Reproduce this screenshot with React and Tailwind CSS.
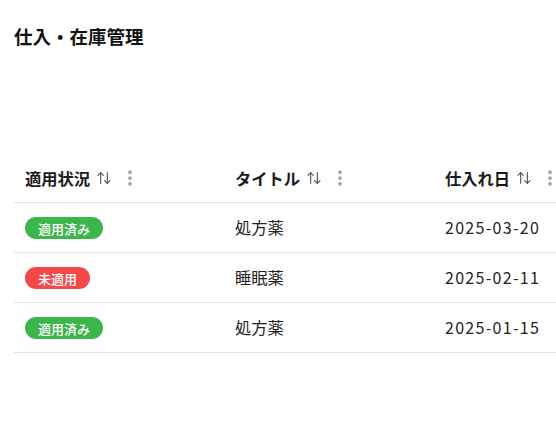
import React from "react";
import { ArrowUpDown, EllipsisVertical } from "lucide-react";

const rows = [
  { status: "適用済み", ok: true, title: "処方薬", date: "2025-03-20" },
  { status: "未適用", ok: false, title: "睡眠薬", date: "2025-02-11" },
  { status: "適用済み", ok: true, title: "処方薬", date: "2025-01-15" },
];

function Head({ label }) {
  return (
    <th className="w-[210px] h-[48px] p-0 text-left align-middle">
      <div className="flex items-center pl-[11px]">
        <span className="text-[16.3px] font-bold text-[#1a1a1a] w-[66px] whitespace-nowrap">{label}</span>
        <ArrowUpDown className="ml-[5px] text-[#555]" size={16} strokeWidth={1.7} />
        <EllipsisVertical className="ml-[8px] text-[#a3a3a3]" size={20} strokeWidth={2.5} />
      </div>
    </th>
  );
}

export default function App() {
  return (
    <div className="w-[556px] h-[432px] bg-white overflow-hidden" style={{ fontFamily: '"Noto Sans CJK JP", "Noto Sans", sans-serif' }}>
      <h1 className="px-[14px] pt-[22px] text-[18.5px] leading-[28px] font-bold text-[#111]">仕入・在庫管理</h1>
      <div className="pl-[14px] mt-[104px]">
        <table className="w-[630px] border-collapse table-fixed">
          <thead>
            <tr className="border-b border-[#e3e3e3]">
              <Head label="適用状況" />
              <Head label="タイトル" />
              <Head label="仕入れ日" />
            </tr>
          </thead>
          <tbody>
            {rows.map((r, i) => (
              <tr key={i} className="border-b border-[#e3e3e3] h-[50px]">
                <td className="pl-[11px]">
                  <span className={`inline-flex items-center h-[22px] px-[13px] rounded-full text-[13px] font-medium text-white ${r.ok ? "bg-[#3cb54b]" : "bg-[#f4484a]"}`}>
                    {r.status}
                  </span>
                </td>
                <td className="pl-[11px] text-[16.3px] text-[#222]">{r.title}</td>
                <td className="pl-[11px] text-[16px] tracking-[1.3px] text-[#222]">{r.date}</td>
              </tr>
            ))}
          </tbody>
        </table>
      </div>
    </div>
  );
}
